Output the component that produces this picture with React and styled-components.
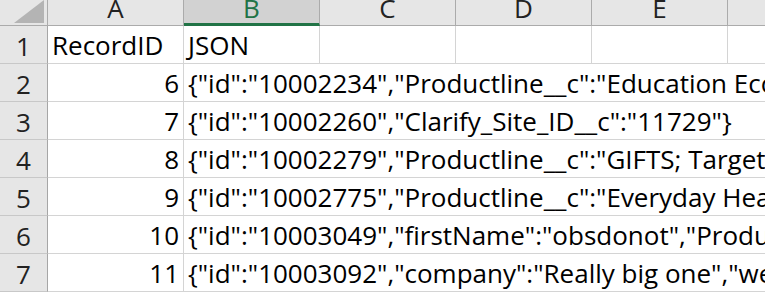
import React from "react";
import styled, { createGlobalStyle } from "styled-components";

const GlobalStyle = createGlobalStyle`
  html, body {
    margin: 0;
    padding: 0;
    background: #ffffff;
    overflow: hidden;
  }
`;

const columns = ["A", "B", "C", "D", "E", "F"];

const rows = [
  { id: "6", json: '{"id":"10002234","Productline__c":"Education Ecosystem","Name":"x"}' },
  { id: "7", json: '{"id":"10002260","Clarify_Site_ID__c":"11729"}' },
  { id: "8", json: '{"id":"10002279","Productline__c":"GIFTS; Target"}' },
  { id: "9", json: '{"id":"10002775","Productline__c":"Everyday Health"}' },
  { id: "10", json: '{"id":"10003049","firstName":"obsdonot","Productline__c":"x"}' },
  { id: "11", json: '{"id":"10003092","company":"Really big one","website":"x"}' },
];

function CornerTriangle() {
  return (
    <svg width="47" height="25" viewBox="0 0 47 25">
      <polygon points="44,0 44,23 14,23" fill="#b4b4b4" />
    </svg>
  );
}

function App() {
  return (
    <>
      <GlobalStyle />
      <Sheet>
        <Corner>
          <CornerTriangle />
        </Corner>
        {columns.map((c) => (
          <ColHeader key={c} $selected={c === "B"}>
            {c}
          </ColHeader>
        ))}

        <RowHeader>1</RowHeader>
        <Cell>RecordID</Cell>
        <Cell>JSON</Cell>
        <Cell />
        <Cell />
        <Cell />
        <Cell />

        {rows.map((r, i) => (
          <React.Fragment key={r.id}>
            <RowHeader>{i + 2}</RowHeader>
            <Cell $align="right">{r.id}</Cell>
            <Cell $span={5}>{r.json}</Cell>
          </React.Fragment>
        ))}
      </Sheet>
    </>
  );
}

const Sheet = styled.div`
  display: grid;
  grid-template-columns: 48px repeat(6, 136px);
  grid-template-rows: 26px repeat(7, 38px);
  width: 864px;
  font-family: "Open Sans", "Liberation Sans", sans-serif;
  font-size: 26px;
  line-height: 25px;
  color: #000;
`;

const Corner = styled.div`
  box-sizing: border-box;
  background: #e6e6e6;
  border-right: 1px solid #ababab;
  border-bottom: 1px solid #ababab;
  overflow: hidden;
  svg {
    display: block;
  }
`;

const ColHeader = styled.div`
  box-sizing: border-box;
  background: ${(p) => (p.$selected ? "#d2d2d2" : "#e6e6e6")};
  color: ${(p) => (p.$selected ? "#217346" : "#222")};
  border-right: 1px solid #ababab;
  border-bottom: ${(p) => (p.$selected ? "3px solid #217346" : "1px solid #ababab")};
  display: flex;
  justify-content: center;
  align-items: flex-end;
  overflow: hidden;
  padding-bottom: ${(p) => (p.$selected ? "2px" : "4px")};
`;

const RowHeader = styled.div`
  box-sizing: border-box;
  background: #e6e6e6;
  border-right: 1px solid #a6a6a6;
  border-bottom: 1px solid #c8c8c8;
  display: flex;
  justify-content: center;
  align-items: flex-end;
  padding-bottom: 4px;
  color: #222;
`;

const Cell = styled.div`
  box-sizing: border-box;
  grid-column: ${(p) => (p.$span ? `span ${p.$span}` : "auto")};
  border-right: 1px solid #d4d4d4;
  border-bottom: 1px solid #d4d4d4;
  display: flex;
  align-items: flex-end;
  justify-content: ${(p) => (p.$align === "right" ? "flex-end" : "flex-start")};
  padding: 0 4px 5px 4px;
  white-space: nowrap;
  overflow: hidden;
`;

export default App;
